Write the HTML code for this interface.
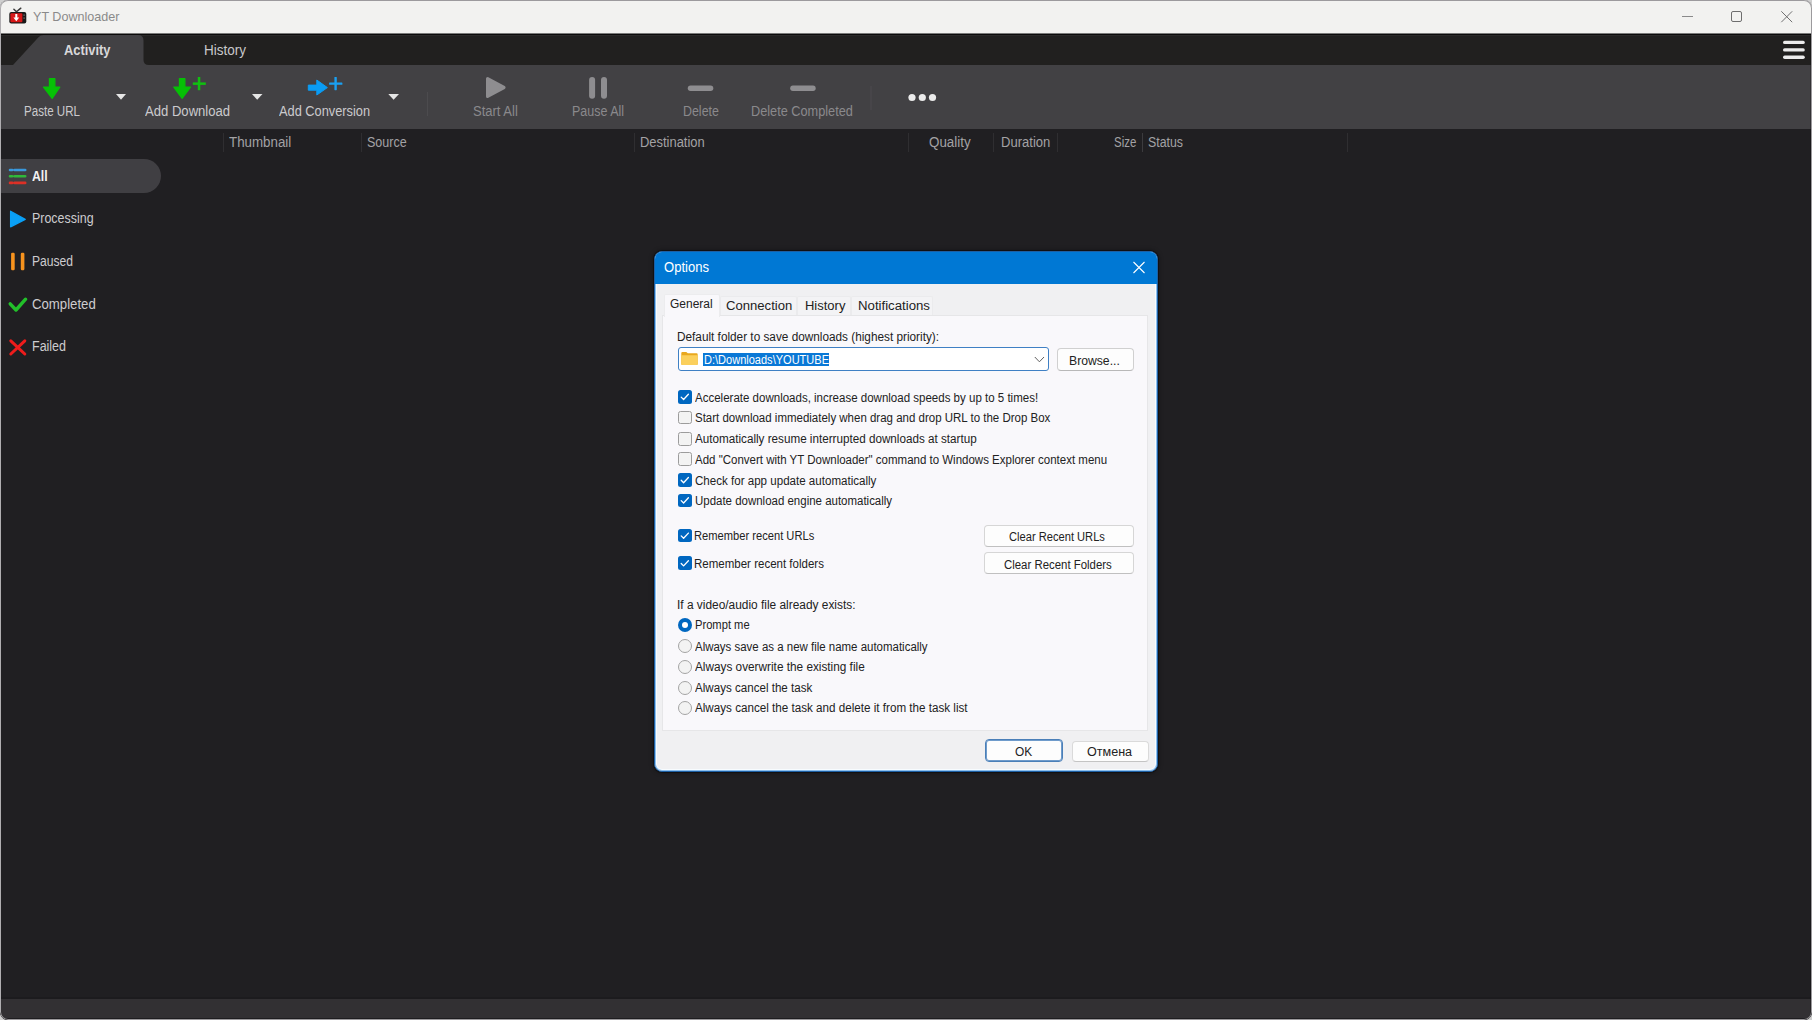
<!DOCTYPE html>
<html><head><meta charset="utf-8"><title>YT Downloader</title>
<style>
html,body{margin:0;padding:0;}
body{width:1812px;height:1020px;overflow:hidden;background:#cfcfcf;font-family:"Liberation Sans",sans-serif;}
#root{position:relative;width:1812px;height:1020px;overflow:hidden;}
.a{position:absolute;}
.t{position:absolute;white-space:pre;font-family:"Liberation Sans",sans-serif;transform-origin:0 0;}
#win{position:absolute;left:0;top:0;width:1812px;height:1020px;border-radius:8px;overflow:hidden;background:#1f1e21;}
#winborder{position:absolute;left:0;top:0;width:1812px;height:1020px;box-sizing:border-box;border:1px solid #9c9a9d;border-left-color:#b0aeb1;border-radius:8px;pointer-events:none;}
.edge{position:absolute;width:1px;top:34px;height:985px;background:rgba(0,0,0,0.22);}
#titlebar{position:absolute;left:0;top:0;width:1812px;height:33px;background:#f2f2f0;}
#blackline{position:absolute;left:0;top:33px;width:1812px;height:3px;background:linear-gradient(#7a7a79 0,#7a7a79 1px,#0b0a0a 1px,#0b0a0a 2px,#2a2928 2px);}
#tabbar{position:absolute;left:0;top:36px;width:1812px;height:29px;background:#21201f;}
#toolbar{position:absolute;left:0;top:65px;width:1812px;height:64px;background:#424144;}
#content{position:absolute;left:0;top:129px;width:1812px;height:868px;background:#201f22;}
#statline{position:absolute;left:0;top:997px;width:1812px;height:2px;background:#1c1b1e;}
#status{position:absolute;left:0;top:999px;width:1812px;height:19px;background:#323033;}
#statbot{position:absolute;left:0;top:1018px;width:1812px;height:2px;background:#1e1d20;}
.sep{position:absolute;width:1px;background:#3a393c;}
.hsep{position:absolute;width:1px;background:#2f2e31;}
#dlg{position:absolute;left:654px;top:251px;width:504px;height:521px;box-sizing:border-box;border:1px solid #1d5fa3;border-radius:8px;overflow:hidden;background:#f0f0f2;box-shadow:0 0 0 1px rgba(0,0,0,0.3), 0 0 4px 1px rgba(0,0,0,0.35), inset 0 0 0 1px #8cc0f0, inset 0 0 0 2px #f8fcff;}
#dlgtitle{position:absolute;left:0;top:0;width:504px;height:32px;background:#0078d4;}
.tab{position:absolute;box-sizing:border-box;background:#f3f3f5;border:1px solid #ebebed;border-bottom:none;border-radius:2px 2px 0 0;}
#panel{position:absolute;box-sizing:border-box;left:662px;top:315px;width:486px;height:416px;background:#f9f8fb;border:1px solid #e6e6e8;}
.btn{position:absolute;box-sizing:border-box;background:#fdfdfd;border:1px solid #d0d0d0;border-radius:4px;border-bottom-color:#b8b8b8;}
.cb{position:absolute;box-sizing:border-box;width:13.5px;height:13.5px;border-radius:2.5px;}
.cb.on{background:#0067c0;}
.cb.off{background:#f3f3f3;border:1px solid #9c9c9c;}
.rd{position:absolute;box-sizing:border-box;width:14px;height:14px;border-radius:50%;}
.rd.off{background:#f3f3f3;border:1px solid #a4a4a4;}
.rd.on{background:#0067c0;}

</style></head><body>
<div id="root">
<div id="win">
  <div id="titlebar"></div>
  <div id="blackline"></div>
  <div id="tabbar"></div>
  <div id="toolbar"></div>
  <div id="content"></div>
  <div id="statline"></div>
  <div id="status"></div>
  <div id="statbot"></div>
  <div class="edge" style="left:1810px"></div>
  <div id="winborder"></div>
</div>
<!-- app icon -->
<svg class="a" style="left:0;top:0" width="40" height="34" viewBox="0 0 40 34">
  <path d="M13.9 9.2 L16.5 11.8 L20.8 8.2" stroke="#3a3a3a" stroke-width="1.5" fill="none" stroke-linecap="round"/>
  <rect x="9.3" y="12" width="17" height="11.6" rx="2" fill="#1a1a1a"/>
  <rect x="10.4" y="13.3" width="12" height="9" rx="1" fill="#d81818"/>
  <rect x="23.5" y="14.5" width="1.2" height="1.2" fill="#888"/>
  <rect x="23.5" y="17.5" width="1.2" height="1.2" fill="#888"/>
  <path d="M15.3 14 H17.3 V17.5 H19.2 L16.3 21.3 L13.4 17.5 H15.3 Z" fill="#fff"/>
</svg>
<!-- window controls -->
<svg class="a" style="left:1660px;top:0" width="152" height="34" viewBox="1660 0 152 34">
  <line x1="1682" y1="16.5" x2="1693" y2="16.5" stroke="#8a8a8a" stroke-width="1"/>
  <rect x="1731.5" y="11.5" width="10" height="10" rx="1.5" stroke="#6e6e6e" stroke-width="1" fill="none"/>
  <path d="M1781.3 11.3 L1792.2 22.2 M1792.2 11.3 L1781.3 22.2" stroke="#707070" stroke-width="1" fill="none"/>
</svg>
<!-- activity tab -->
<svg class="a" style="left:0;top:34px" width="160" height="32" viewBox="0 34 160 32">
  <path d="M13 65 L38.5 37.2 Q40.5 35 43.5 35 L138 35 Q143.5 35 143.5 40.5 L143.5 60 Q143.5 65 149 65 Z" fill="#424144"/>
</svg>
<!-- hamburger -->
<svg class="a" style="left:1776px;top:36px" width="36" height="28" viewBox="1776 36 36 28">
  <rect x="1783" y="40.7" width="21.8" height="3.4" rx="1.7" fill="#ececec"/>
  <rect x="1783" y="48.2" width="21.8" height="3.4" rx="1.7" fill="#ececec"/>
  <rect x="1783" y="55.6" width="21.8" height="3.4" rx="1.7" fill="#ececec"/>
</svg>
<!-- toolbar icons -->
<svg class="a" style="left:0;top:65px" width="960" height="64" viewBox="0 65 960 64">
  <!-- paste url arrow -->
  <path d="M49.4 78.6 H54.9 V87.1 H59.8 L52.15 98.4 L43.5 87.1 H49.4 Z" fill="#06c106" stroke="#06c106" stroke-width="1.2" stroke-linejoin="round"/>
  <path d="M116 94 H126 L121 99.7 Z" fill="#e6e6e6"/>
  <!-- add download -->
  <path d="M179.4 78.6 H184.9 V87.1 H190.5 L182.1 98.3 L173.8 87.1 H179.4 Z" fill="#06c106" stroke="#06c106" stroke-width="1.2" stroke-linejoin="round"/>
  <rect x="192.8" y="82.4" width="13" height="2.5" fill="#10c010"/>
  <rect x="197.8" y="77" width="2.5" height="13.2" fill="#10c010"/>
  <path d="M252 94 H262.5 L257.2 99.7 Z" fill="#e6e6e6"/>
  <!-- add conversion -->
  <path d="M308.3 85.1 H316.8 V80 L327.4 87.6 L316.8 95 V90.2 H308.3 Z" fill="#0a9cf4" stroke="#0a9cf4" stroke-width="1" stroke-linejoin="round"/>
  <rect x="329.1" y="82.4" width="13.3" height="2.4" rx="0.6" fill="#1aa0f2"/>
  <rect x="334.4" y="77" width="2.4" height="13.2" rx="0.6" fill="#1aa0f2"/>
  <path d="M388.3 94 H399 L393.6 99.7 Z" fill="#e6e6e6"/>
  <!-- separators -->
  <rect x="427" y="92" width="1" height="24" fill="#4c4b4e"/>
  <rect x="870.5" y="86" width="1" height="24" fill="#4c4b4e"/>
  <!-- start all -->
  <path d="M487.6 78.6 L504 87.5 L487.6 96.4 Z" fill="#8e8d90" stroke="#8e8d90" stroke-width="3.2" stroke-linejoin="round"/>
  <!-- pause all -->
  <rect x="589.1" y="76.9" width="6" height="21.9" rx="3" fill="#8e8d90"/>
  <rect x="601" y="76.9" width="6" height="21.9" rx="3" fill="#8e8d90"/>
  <!-- delete -->
  <rect x="687.8" y="85.6" width="25.5" height="5.4" rx="2.7" fill="#8e8d90"/>
  <rect x="790.2" y="85.6" width="25.5" height="5.4" rx="2.7" fill="#8e8d90"/>
  <!-- dots -->
  <circle cx="912" cy="97.5" r="3.6" fill="#ececec"/>
  <circle cx="922.3" cy="97.5" r="3.6" fill="#ececec"/>
  <circle cx="932.5" cy="97.5" r="3.6" fill="#ececec"/>
</svg>
<!-- column header separators -->
<div class="hsep" style="left:223px;top:132.5px;height:19px"></div>
<div class="hsep" style="left:361px;top:132.5px;height:19px"></div>
<div class="hsep" style="left:634px;top:132.5px;height:19px"></div>
<div class="hsep" style="left:908px;top:132.5px;height:19px"></div>
<div class="hsep" style="left:993px;top:132.5px;height:19px"></div>
<div class="hsep" style="left:1057px;top:132.5px;height:19px"></div>
<div class="hsep" style="left:1142px;top:132.5px;height:19px;background:#3c3b3e"></div>
<div class="hsep" style="left:1347px;top:132.5px;height:19px"></div>
<!-- sidebar -->
<div class="a" style="left:1px;top:159px;width:160px;height:34px;background:#403f43;border-radius:0 17px 17px 0"></div>
<svg class="a" style="left:0;top:150px" width="40" height="220" viewBox="0 150 40 220">
  <g stroke-linecap="round" stroke-width="2.6">
  <path d="M10 170 H12.2 M14.6 170 H25.2" stroke="#3a98dc"/>
  <path d="M10 176.3 H12.2 M14.6 176.3 H25.2" stroke="#2fb83a"/>
  <path d="M10 182.9 H12.2 M14.6 182.9 H25.2" stroke="#dc3026"/>
  </g>
  <path d="M10.6 211.2 L25.2 219.4 L10.6 226.8 Z" fill="#0aa0f6" stroke="#0aa0f6" stroke-width="1.3" stroke-linejoin="round"/>
  <rect x="11.1" y="252.7" width="3.6" height="17.6" rx="1.2" fill="#f7931e"/>
  <rect x="20.8" y="252.7" width="3.6" height="17.6" rx="1.2" fill="#f7931e"/>
  <path d="M10.2 303.8 L16 310 L25.6 299.2" stroke="#22c02a" stroke-width="3.4" fill="none" stroke-linecap="round" stroke-linejoin="round"/>
  <path d="M10.8 340.8 L24.8 354 M24.8 340.8 L10.8 354" stroke="#ee1c1c" stroke-width="3" fill="none" stroke-linecap="round"/>
</svg>
<!-- ================= dialog ================= -->
<div id="dlg">
  <div id="dlgtitle"></div>
</div>
<svg class="a" style="left:1128px;top:256px" width="22" height="22" viewBox="1128 256 22 22">
  <path d="M1133.5 262 L1144.5 273 M1144.5 262 L1133.5 273" stroke="#fff" stroke-width="1.1" fill="none"/>
</svg>
<div class="tab" style="left:720px;top:296px;width:77px;height:20px"></div>
<div class="tab" style="left:797px;top:296px;width:54px;height:20px"></div>
<div class="tab" style="left:851px;top:296px;width:82px;height:20px"></div>
<div id="panel"></div>
<div class="tab" style="left:664px;top:293.5px;width:56px;height:23px;background:#f9f8fb;border-color:#ececee"></div>
<!-- combobox -->
<div class="a" style="left:677.5px;top:347.2px;width:371.5px;height:23.6px;box-sizing:border-box;background:#fff;border:1px solid #3f80c4;border-radius:3px"></div>
<svg class="a" style="left:679px;top:349px" width="22" height="20" viewBox="679 349 22 20">
  <path d="M681.3 353 Q681.3 351.9 682.4 351.9 H686.3 L687.8 353.3 H696.6 Q697.7 353.3 697.7 354.4 V364 Q697.7 365.1 696.6 365.1 H682.4 Q681.3 365.1 681.3 364 Z" fill="#e9a81e"/>
  <path d="M681.3 355.3 H697.7 V364 Q697.7 365.1 696.6 365.1 H682.4 Q681.3 365.1 681.3 364 Z" fill="#fbd05c"/>
</svg>
<div class="a" style="left:703.3px;top:352.8px;width:125.7px;height:13.4px;background:#0a78d6"></div>
<svg class="a" style="left:1030px;top:352px" width="18" height="14" viewBox="1030 352 18 14">
  <path d="M1034.8 357 L1039.4 361.8 L1044 357" stroke="#606060" stroke-width="1" fill="none"/>
</svg>
<div class="btn" style="left:1056.5px;top:348px;width:77px;height:22.5px"></div>
<!-- checkboxes -->
<div class="cb on" style="left:678px;top:390.2px"></div>
<div class="cb off" style="left:678px;top:410.5px"></div>
<div class="cb off" style="left:678px;top:432px"></div>
<div class="cb off" style="left:678px;top:452.4px"></div>
<div class="cb on" style="left:678px;top:473.4px"></div>
<div class="cb on" style="left:678px;top:493.7px"></div>
<div class="cb on" style="left:678px;top:528.5px"></div>
<div class="cb on" style="left:678px;top:556.2px"></div>
<svg class="a" style="left:676px;top:388px" width="18" height="185" viewBox="676 388 18 185">
  <g stroke="#fff" stroke-width="1.3" fill="none" stroke-linecap="round" stroke-linejoin="round">
    <path d="M681.2 397.1 L683.6 399.5 L688.4 394.3"/>
    <path d="M681.2 480.3 L683.6 482.7 L688.4 477.5"/>
    <path d="M681.2 500.6 L683.6 503 L688.4 497.8"/>
    <path d="M681.2 535.9 L683.6 538.3 L688.4 533.1"/>
    <path d="M681.2 563.5 L683.6 565.9 L688.4 560.7"/>
  </g>
</svg>
<div class="btn" style="left:983.5px;top:524.5px;width:150.5px;height:22px;border-color:#d6d6d6;border-bottom-color:#c0c0c0"></div>
<div class="btn" style="left:983.5px;top:552.3px;width:150.5px;height:21.7px;border-color:#d6d6d6;border-bottom-color:#c0c0c0"></div>
<!-- radios -->
<div class="rd on" style="left:677.8px;top:617.8px"></div>
<div class="a" style="left:681.8px;top:621.8px;width:6px;height:6px;border-radius:50%;background:#fff"></div>
<div class="rd off" style="left:677.8px;top:639px"></div>
<div class="rd off" style="left:677.8px;top:659.6px"></div>
<div class="rd off" style="left:677.8px;top:680.8px"></div>
<div class="rd off" style="left:677.8px;top:700.8px"></div>
<!-- OK / Cancel -->
<div class="btn" style="left:985px;top:739px;width:78px;height:23px;border:1px solid #4a7fb8;border-radius:4px;box-shadow:inset 0 0 0 1px #6f9bcb"></div>
<div class="btn" style="left:1071.5px;top:740.5px;width:77.4px;height:21px;border-color:#dadada;border-bottom-color:#c4c4c4"></div>

<div class="t" style="left:32.80px;top:10.17px;font-size:13.5px;line-height:13.5px;font-weight:400;color:#8a8a8a;transform:scaleX(0.9320);">YT Downloader</div>
<div class="t" style="left:64.40px;top:44.32px;font-size:13.8px;line-height:13.8px;font-weight:700;color:#d8d8da;transform:scaleX(0.9329);">Activity</div>
<div class="t" style="left:204.00px;top:44.32px;font-size:13.8px;line-height:13.8px;font-weight:400;color:#c9c8cb;transform:scaleX(0.9782);">History</div>
<div class="t" style="left:24.00px;top:104.52px;font-size:13.8px;line-height:13.8px;font-weight:400;color:#cbcacd;transform:scaleX(0.8393);">Paste URL</div>
<div class="t" style="left:145.20px;top:104.52px;font-size:13.8px;line-height:13.8px;font-weight:400;color:#cbcacd;transform:scaleX(0.9482);">Add Download</div>
<div class="t" style="left:278.50px;top:104.52px;font-size:13.8px;line-height:13.8px;font-weight:400;color:#cbcacd;transform:scaleX(0.9280);">Add Conversion</div>
<div class="t" style="left:472.70px;top:104.52px;font-size:13.8px;line-height:13.8px;font-weight:400;color:#8a898c;transform:scaleX(0.9422);">Start All</div>
<div class="t" style="left:572.10px;top:104.52px;font-size:13.8px;line-height:13.8px;font-weight:400;color:#8a898c;transform:scaleX(0.9039);">Pause All</div>
<div class="t" style="left:682.50px;top:104.52px;font-size:13.8px;line-height:13.8px;font-weight:400;color:#8a898c;transform:scaleX(0.9000);">Delete</div>
<div class="t" style="left:751.40px;top:104.52px;font-size:13.8px;line-height:13.8px;font-weight:400;color:#8a898c;transform:scaleX(0.9227);">Delete Completed</div>
<div class="t" style="left:228.80px;top:135.82px;font-size:13.8px;line-height:13.8px;font-weight:400;color:#a3a2a5;transform:scaleX(0.9671);">Thumbnail</div>
<div class="t" style="left:367.30px;top:135.82px;font-size:13.8px;line-height:13.8px;font-weight:400;color:#a3a2a5;transform:scaleX(0.9081);">Source</div>
<div class="t" style="left:640.20px;top:135.82px;font-size:13.8px;line-height:13.8px;font-weight:400;color:#a3a2a5;transform:scaleX(0.9373);">Destination</div>
<div class="t" style="left:929.30px;top:135.82px;font-size:13.8px;line-height:13.8px;font-weight:400;color:#a3a2a5;transform:scaleX(0.9685);">Quality</div>
<div class="t" style="left:1001.00px;top:135.82px;font-size:13.8px;line-height:13.8px;font-weight:400;color:#a3a2a5;transform:scaleX(0.9452);">Duration</div>
<div class="t" style="left:1114.20px;top:135.82px;font-size:13.8px;line-height:13.8px;font-weight:400;color:#a3a2a5;transform:scaleX(0.8307);">Size</div>
<div class="t" style="left:1147.80px;top:135.82px;font-size:13.8px;line-height:13.8px;font-weight:400;color:#a3a2a5;transform:scaleX(0.8946);">Status</div>
<div class="t" style="left:32.30px;top:169.62px;font-size:13.8px;line-height:13.8px;font-weight:700;color:#f2f2f2;transform:scaleX(0.8900);">All</div>
<div class="t" style="left:32.30px;top:212.12px;font-size:13.8px;line-height:13.8px;font-weight:400;color:#cdcccf;transform:scaleX(0.9024);">Processing</div>
<div class="t" style="left:32.30px;top:255.12px;font-size:13.8px;line-height:13.8px;font-weight:400;color:#cdcccf;transform:scaleX(0.8783);">Paused</div>
<div class="t" style="left:32.30px;top:297.72px;font-size:13.8px;line-height:13.8px;font-weight:400;color:#cdcccf;transform:scaleX(0.9560);">Completed</div>
<div class="t" style="left:32.30px;top:339.92px;font-size:13.8px;line-height:13.8px;font-weight:400;color:#cdcccf;transform:scaleX(0.9048);">Failed</div>
<div class="t" style="left:664.30px;top:261.12px;font-size:13.8px;line-height:13.8px;font-weight:400;color:#ffffff;transform:scaleX(0.9461);">Options</div>
<div class="t" style="left:670.30px;top:298.44px;font-size:12px;line-height:12px;font-weight:400;color:#222222;transform:scaleX(0.9976);">General</div>
<div class="t" style="left:725.50px;top:300.24px;font-size:12px;line-height:12px;font-weight:400;color:#222222;transform:scaleX(1.0919);">Connection</div>
<div class="t" style="left:804.50px;top:300.24px;font-size:12px;line-height:12px;font-weight:400;color:#222222;transform:scaleX(1.0818);">History</div>
<div class="t" style="left:858.00px;top:300.24px;font-size:12px;line-height:12px;font-weight:400;color:#222222;transform:scaleX(1.1013);">Notifications</div>
<div class="t" style="left:677.00px;top:330.74px;font-size:12px;line-height:12px;font-weight:400;color:#222222;transform:scaleX(0.9820);">Default folder to save downloads (highest priority):</div>
<div class="t" style="left:703.50px;top:353.94px;font-size:12px;line-height:12px;font-weight:400;color:#ffffff;transform:scaleX(0.9188);">D:\Downloads\YOUTUBE</div>
<div class="t" style="left:1069.10px;top:354.54px;font-size:12px;line-height:12px;font-weight:400;color:#222222;transform:scaleX(1.0157);">Browse...</div>
<div class="t" style="left:694.70px;top:391.64px;font-size:12px;line-height:12px;font-weight:400;color:#222222;transform:scaleX(0.9596);">Accelerate downloads, increase download speeds by up to 5 times!</div>
<div class="t" style="left:694.70px;top:411.94px;font-size:12px;line-height:12px;font-weight:400;color:#222222;transform:scaleX(0.9574);">Start download immediately when drag and drop URL to the Drop Box</div>
<div class="t" style="left:694.70px;top:433.44px;font-size:12px;line-height:12px;font-weight:400;color:#222222;transform:scaleX(0.9731);">Automatically resume interrupted downloads at startup</div>
<div class="t" style="left:694.70px;top:453.84px;font-size:12px;line-height:12px;font-weight:400;color:#222222;transform:scaleX(0.9577);">Add &quot;Convert with YT Downloader&quot; command to Windows Explorer context menu</div>
<div class="t" style="left:694.70px;top:474.84px;font-size:12px;line-height:12px;font-weight:400;color:#222222;transform:scaleX(0.9643);">Check for app update automatically</div>
<div class="t" style="left:694.70px;top:495.04px;font-size:12px;line-height:12px;font-weight:400;color:#222222;transform:scaleX(0.9561);">Update download engine automatically</div>
<div class="t" style="left:694.30px;top:530.24px;font-size:12px;line-height:12px;font-weight:400;color:#222222;transform:scaleX(0.9291);">Remember recent URLs</div>
<div class="t" style="left:694.30px;top:557.84px;font-size:12px;line-height:12px;font-weight:400;color:#222222;transform:scaleX(0.9594);">Remember recent folders</div>
<div class="t" style="left:1009.40px;top:530.84px;font-size:12px;line-height:12px;font-weight:400;color:#222222;transform:scaleX(0.9277);">Clear Recent URLs</div>
<div class="t" style="left:1003.90px;top:558.64px;font-size:12px;line-height:12px;font-weight:400;color:#222222;transform:scaleX(0.9507);">Clear Recent Folders</div>
<div class="t" style="left:677.10px;top:599.04px;font-size:12px;line-height:12px;font-weight:400;color:#222222;transform:scaleX(0.9911);">If a video/audio file already exists:</div>
<div class="t" style="left:694.70px;top:619.44px;font-size:12px;line-height:12px;font-weight:400;color:#222222;transform:scaleX(0.9304);">Prompt me</div>
<div class="t" style="left:694.70px;top:640.64px;font-size:12px;line-height:12px;font-weight:400;color:#222222;transform:scaleX(0.9554);">Always save as a new file name automatically</div>
<div class="t" style="left:694.70px;top:661.24px;font-size:12px;line-height:12px;font-weight:400;color:#222222;transform:scaleX(0.9824);">Always overwrite the existing file</div>
<div class="t" style="left:694.70px;top:682.44px;font-size:12px;line-height:12px;font-weight:400;color:#222222;transform:scaleX(0.9663);">Always cancel the task</div>
<div class="t" style="left:694.70px;top:702.44px;font-size:12px;line-height:12px;font-weight:400;color:#222222;transform:scaleX(0.9708);">Always cancel the task and delete it from the task list</div>
<div class="t" style="left:1015.10px;top:745.52px;font-size:12.5px;line-height:12.5px;font-weight:400;color:#222222;transform:scaleX(0.9522);">OK</div>
<div class="t" style="left:1087.20px;top:745.52px;font-size:12.5px;line-height:12.5px;font-weight:400;color:#222222;transform:scaleX(1.0054);">Отмена</div>
</div>
</body></html>
